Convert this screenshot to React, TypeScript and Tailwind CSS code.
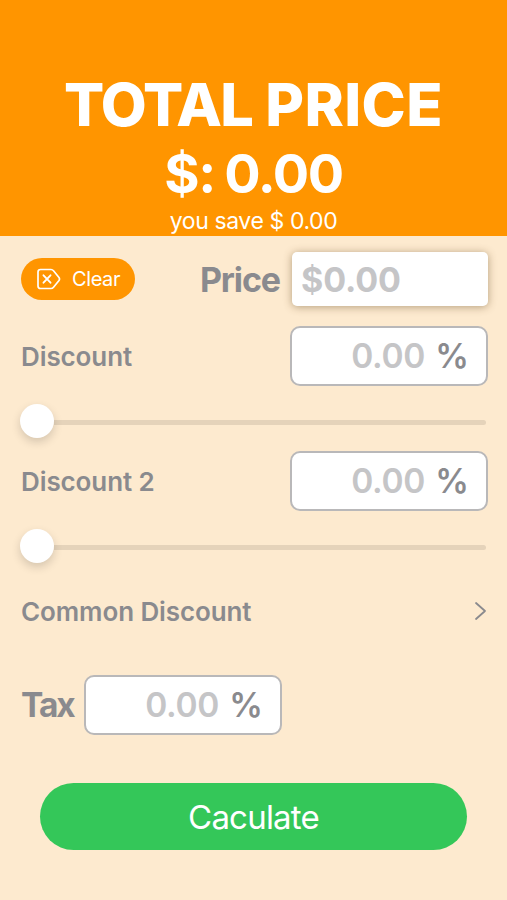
import React from "react";

const font = "font-['Inter','Liberation_Sans',sans-serif]";
const label = "text-[26px] font-semibold tracking-[-0.1px]";

function PercentField() {
  return (
    <div className="flex h-[60px] w-[198px] items-center justify-end gap-[10px] rounded-[10px] border-2 border-[#b9b8b9] bg-white pt-[1px] pr-[18px] text-[33.5px] leading-none">
      <span className="font-semibold tracking-[-0.3px] text-[#c5c5c7]">0.00</span>
      <span className="font-semibold tracking-[-0.8px] text-[#8a8a8e]">%</span>
    </div>
  );
}

function Slider() {
  return (
    <div className="-ml-[1px] flex h-[34px] items-center">
      <div className="z-10 size-[34px] shrink-0 rounded-full bg-white shadow-[0_4px_10px_rgba(0,0,0,0.16)]" />
      <div className="mt-[2px] mr-[2px] h-[5px] flex-1 rounded-r-full bg-[#e5d3ba]" />
    </div>
  );
}

export default function App() {
  return (
    <main className={`h-[900px] w-[507px] overflow-hidden bg-[#fdeacf] text-[#8a8a8e] ${font}`}>
      <header className="flex h-[236px] flex-col items-center bg-[#ff9500] pt-[72px] text-white">
        <h1 className="text-[59.5px] leading-[64px] font-extrabold whitespace-nowrap">
          <span className="tracking-[-1.7px]">TOTAL</span> <span className="tracking-[0.4px]">PRICE</span>
        </h1>
        <p className="mt-[6px] text-[54px] leading-[64px] font-bold tracking-[-1.4px] [word-spacing:-2px]">$: 0.00</p>
        <p className="mt-[1px] text-[23px] leading-[28px] tracking-[-0.4px]">you save $ 0.00</p>
      </header>
      <section className="pt-[15px] pr-[19px] pl-[21px]">
        <div className="flex h-[56px] items-center">
          <button className="flex h-[42px] w-[114px] items-center gap-[11px] rounded-full bg-[#ff9500] pl-[16px] text-[20px] tracking-[-0.4px] text-white">
            <svg width="24" height="22" viewBox="0 0 24 22" fill="none" stroke="currentColor" strokeWidth="1.7" strokeLinecap="round" strokeLinejoin="round">
              <path d="M3.5 1.5H14Q15.5 1.5 16.5 2.7L22 9.5Q23 11 22 12.5L16.5 19.3Q15.5 20.5 14 20.5H3.5Q1 20.5 1 18V4Q1 1.5 3.5 1.5Z" />
              <path d="M6.5 7.3L13.5 14.7M13.5 7.3L6.5 14.7" strokeWidth="1.9" />
            </svg>
            Clear
          </button>
          <span className="ml-auto text-[34px] font-bold tracking-[-1.1px]">Price</span>
          <div className="mb-[1px] ml-[12px] flex h-[54px] w-[196px] items-center rounded-[5px] bg-white pt-[1px] pl-[9px] text-[34px] font-bold tracking-[-0.1px] text-[#c5c5c7] shadow-[0_1px_9px_rgba(90,65,25,0.45)]">$0.00</div>
        </div>
        <div className={`mt-[19px] flex h-[60px] items-center justify-between ${label}`}>Discount<PercentField /></div>
        <div className="mt-[18px]"><Slider /></div>
        <div className={`mt-[13px] flex h-[60px] items-center justify-between ${label}`}>Discount 2<PercentField /></div>
        <div className="mt-[18px]"><Slider /></div>
        <div className={`mt-[28px] flex h-[40px] items-center justify-between ${label}`}>
          Common Discount
          <svg width="14" height="20" viewBox="0 0 14 20" fill="none" stroke="currentColor" strokeWidth="1.8" strokeLinecap="round" strokeLinejoin="round"><path d="M2 2L11 10L2 18" /></svg>
        </div>
        <div className="mt-[44px] flex h-[60px] items-center">
          <span className="w-[63px] text-[33.5px] font-bold tracking-[-2px]">Tax</span>
          <PercentField />
        </div>
        <button className="mt-[48px] ml-[19px] flex h-[67px] w-[427px] items-center justify-center rounded-full bg-[#34c759] pt-[2px] text-[33px] tracking-[-0.8px] text-white">Caculate</button>
      </section>
    </main>
  );
}
